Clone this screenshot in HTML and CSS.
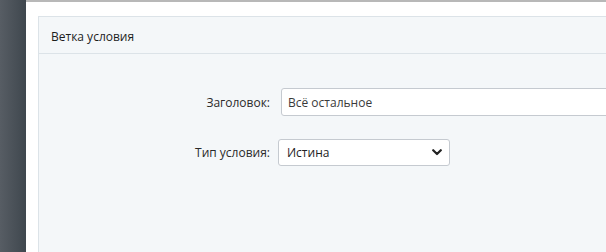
FILE: index.html
```html
<!DOCTYPE html>
<html lang="ru">
<head>
<meta charset="utf-8">
<link rel="stylesheet" href="styles.css">
</head>
<body>
<div class="layout">
  <aside class="sidebar"></aside>
  <main class="main">
    <section class="panel">
      <header class="panel-head">Ветка условия</header>
      <div class="panel-body">
        <div class="form">
          <label class="label" for="title">Заголовок:</label>
          <input class="input" id="title" type="text" value="Всё остальное">
          <label class="label label-select" for="type">Тип условия:</label>
          <div class="select">
            <span>Истина</span>
            <svg class="chev" width="10" height="7" viewBox="0 0 10 7"><path d="M1.2 1.2 L5 5 L8.8 1.2" fill="none" stroke="#222" stroke-width="2.2" stroke-linecap="round" stroke-linejoin="round"/></svg>
          </div>
        </div>
      </div>
    </section>
  </main>
</div>
</body>
</html>
```
FILE: styles.css
```css
html, body {
  margin: 0;
  padding: 0;
  height: 100%;
  background: #ffffff;
  font-family: "Open Sans", "Noto Sans", sans-serif;
  font-size: 12px;
  color: #222;
}
.layout {
  display: flex;
  height: 252px;
  overflow: hidden;
}
.sidebar {
  width: 26px;
  flex: none;
  background: linear-gradient(to right, #575d64, #3f474e);
}
.main {
  flex: 1;
  border-top: 2px solid #b8b8b8;
  padding: 14px 0 0 12px;
  overflow: hidden;
  display: flex;
  flex-direction: column;
}
.panel {
  flex: 1;
  margin-right: -40px;
  border: 1px solid #dce3e8;
  border-bottom: none;
  background: #f4f7f9;
  display: flex;
  flex-direction: column;
}
.panel-head {
  height: 37px;
  box-sizing: border-box;
  padding: 12px 0 0 12px;
  border-bottom: 1px solid #dce3e8;
  line-height: 16px;
  color: #1d1d1d;
}
.panel-body {
  padding-top: 34px;
}
.form {
  display: grid;
  grid-template-columns: 231px 1fr;
  column-gap: 11px;
  row-gap: 23px;
  align-items: center;
}
.label {
  text-align: right;
  color: #2a2a2a;
}
.input {
  width: 360px;
  height: 28px;
  box-sizing: border-box;
  border: 1px solid #c5cad0;
  border-radius: 3px;
  background: #fff;
  padding: 0 6px;
  font: inherit;
  color: #3a3a3a;
}
.select {
  margin-left: -3px;
  width: 172px;
  height: 27px;
  box-sizing: border-box;
  border: 1px solid #c5cad0;
  border-radius: 3px;
  background: #fff;
  padding: 0 7px 0 8px;
  display: flex;
  align-items: center;
  justify-content: space-between;
  color: #222;
}
.chev {
  display: block;
}
```
